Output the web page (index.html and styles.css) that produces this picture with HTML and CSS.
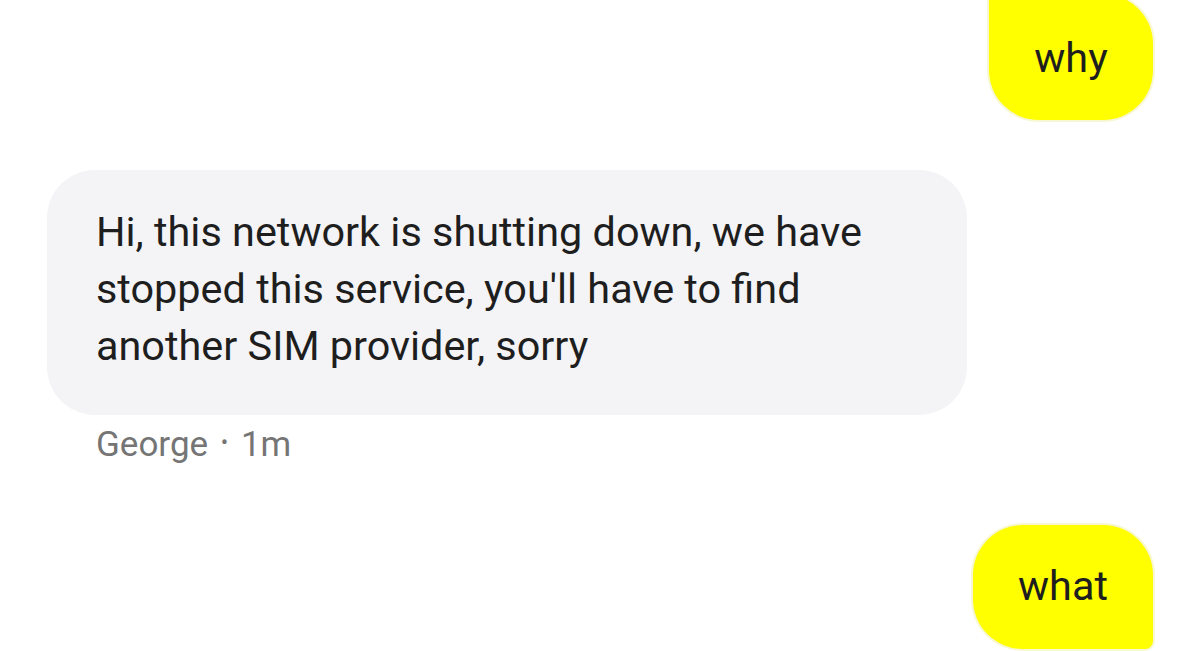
FILE: index.html
```html
<!DOCTYPE html>
<html>
<head>
<meta charset="utf-8">
<link rel="stylesheet" href="styles.css">
</head>
<body>
<main class="thread">
  <div class="row row-out row-first">
    <div class="bubble bubble-out bubble-out-top">why</div>
  </div>
  <div class="row row-in">
    <div class="bubble bubble-in">Hi, this network is shutting down, we have stopped this service, you'll have to find another SIM provider, sorry</div>
    <div class="meta">George <span class="dot">•</span> 1m</div>
  </div>
  <div class="row row-out row-last">
    <div class="bubble bubble-out bubble-out-last">what</div>
  </div>
</main>
</body>
</html>
```
FILE: styles.css
```css
html, body {
  margin: 0;
  padding: 0;
  background: #ffffff;
}

body {
  font-family: Roboto, "Noto Sans", sans-serif;
  color: #1e1e1e;
  width: 1200px;
  height: 651px;
  overflow: hidden;
}

.thread {
  display: flex;
  flex-direction: column;
  padding: 0 47px 0 47px;
}

.row {
  display: flex;
  flex-direction: column;
}

.row-out {
  align-items: flex-end;
}

.row-in {
  align-items: flex-start;
}

.row-first {
  margin-top: -6px;
}

.bubble {
  font-size: 41.4px;
  line-height: 57px;
  box-sizing: border-box;
}

.bubble-out {
  background: #ffff00;
  box-shadow: 0 0 0 2px #f7f7d2;
  display: flex;
  align-items: center;
  justify-content: center;
}

.bubble-out-top {
  width: 164px;
  height: 126px;
  border-radius: 4px 50px 50px 50px;
  padding-top: 2px;
}

.bubble-out-last {
  width: 180px;
  height: 124px;
  border-radius: 50px 50px 8px 50px;
  margin-top: 60px;
  padding-bottom: 2px;
}

.bubble-in {
  margin-top: 50px;
  width: 920px;
  background: #f4f4f6;
  border-radius: 48px;
  padding: 34px 40px 40px 49px;
}

.meta {
  margin-top: 8px;
  margin-left: 49px;
  font-size: 35px;
  line-height: 40px;
  color: #757575;
}

.dot {
  font-size: 22px;
  vertical-align: 6px;
  margin: 0 4px;
}
```
